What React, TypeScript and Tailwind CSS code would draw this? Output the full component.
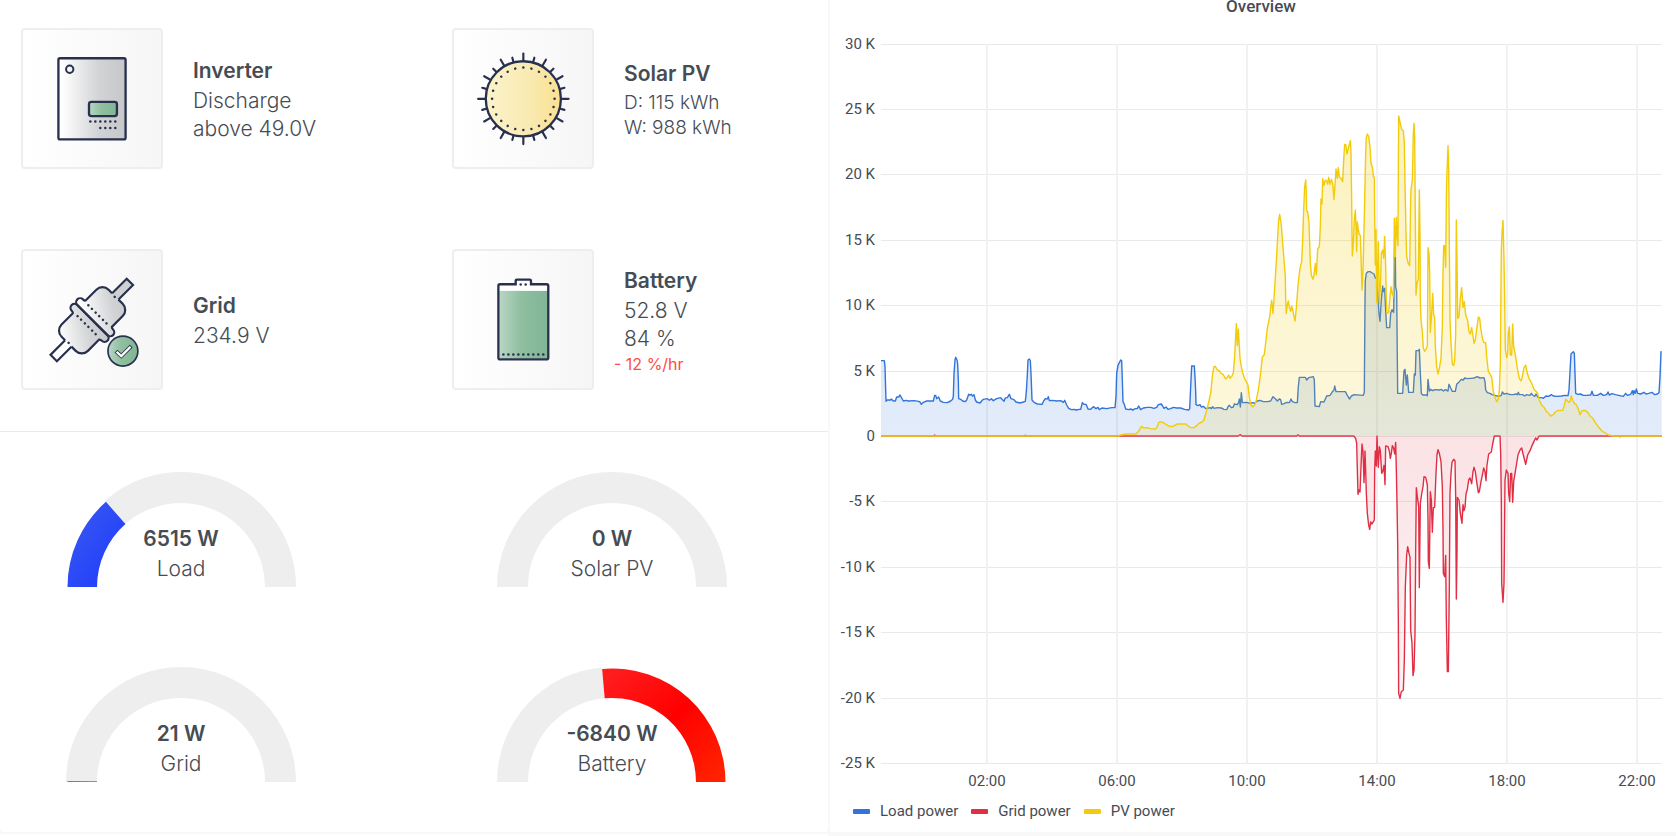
import React from 'react'

const INK = '#28304d'

type Trace = { x: number; y: number; points: string }

// chart samples, split by part of the day; x / y is the origin of each part (3 units = 1px)
const night = { x: -153, y: -348 }
const noon = { x: 897, y: -1008 }
const evening = { x: 1557, y: -1008 }
const exported = { x: 1347, y: -48 }

const loadPower: Trace[] = [
    { ...night, points: '153,122 163,122 165,140 168,244 172,240 182,240 184,237 190,243 196,243 200,231 206,231 210,225 214,232 220,243 228,241 235,243 252,242 266,244 270,246 274,253 280,247 290,243 310,243 314,226 317,226 320,236 326,231 331,243 340,247 352,248 362,243 368,238 370,228 372,160 375,120 377,112 381,120 383,132 385,180 386,236 392,238 398,243 406,245 410,240 416,223 420,225 424,223 428,228 432,224 436,240 440,246 450,249 455,243 460,238 472,236 478,241 484,236 490,242 500,236 512,233 516,238 522,244 526,234 532,233 538,223 543,236 552,239 558,246 570,249 580,246 586,244 589,215 592,165 594,120 598,117 601,122 603,160 606,240 612,247 622,252 636,253 641,243 646,236 652,237 655,230 658,242 668,241 680,243 692,242 700,247 704,241 710,255 716,265 724,269 732,268 738,270 748,268 752,268 757,248 762,253 768,253 774,267 782,268 790,260 798,266 804,262 808,269 816,264 830,266 845,263 855,263 858,230 860,160 864,136 872,120 875,122 877,180 879,245 883,253 887,267 896,269 902,267 908,270 916,266 922,266 926,258 932,269 940,264 952,262 962,262 972,265 980,262 985,254 994,252 998,258 1002,265 1008,261 1014,268 1022,266 1030,262 1040,264 1052,264 1064,268 1076,270 1079,266 1082,200 1085,138 1093,138 1095,170 1097,215 1098,254 1104,257 1110,254 1114,261 1120,259 1126,265' },
    { ...noon, points: '82,925 90,923 94,926 98,920 102,925 112,923 124,924 132,928 140,929 144,920 148,916 154,923 160,921 163,912 172,914 176,907 178,897 181,921 184,878 187,908 200,907 210,910 218,908 224,910 232,903 240,901 250,905 262,905 272,903 279,890 286,896 292,903 298,897 302,899 305,913 312,911 320,907 328,908 333,897 337,905 345,908 352,908 355,860 358,832 376,832 380,840 386,833 400,830 403,840 405,918 418,920 422,905 432,906 440,888 450,886 456,877 462,870 464,858 468,875 476,875 496,875 502,886 509,897 514,888 522,884 550,886 553,876 555,600 556,540 559,520 564,515 570,515 577,519 582,522 586,534 590,534 594,590 597,640 600,664 604,600 608,558 610,575 614,565 617,630 620,683 629,683 632,640 636,629 641,637 643,520 645,380 647,560 650,575 653,880 668,880 672,812 675,808 679,855 682,825 686,877 700,877 703,822 706,825 708,752 716,752 718,748 721,820' },
    { ...evening, points: '64,880 68,885 80,885 82,887 84,838 88,873 92,868 98,872 104,869 118,870 124,868 130,873 136,869 144,873 147,853 152,864 157,874 166,874 170,853 178,845 184,838 190,840 194,834 202,836 212,835 222,834 232,830 240,834 252,833 255,845 257,870 262,878 270,880 276,884 284,886 296,889 304,886 307,876 312,882 320,880 330,884 340,884 348,882 352,884 355,877 358,884 368,884 374,888 380,884 390,886 394,880 398,885 404,889 408,882 414,892 424,893 430,895 438,888 446,889 454,884 460,888 470,889 484,888 494,886 504,887 507,870 510,815 513,762 520,755 523,760 525,820 527,880 534,883 542,882 550,886 560,886 572,885 576,874 580,886 592,886 602,880 610,886 620,884 624,876 628,885 636,881 646,884 656,886 670,889 677,880 682,886 692,883 697,872 700,884 702,872 706,880 709,867 713,880 722,882 732,877 738,882 746,880 756,877 764,884 772,882 777,878 780,830 783,755 785,755' },
]

const pvPower: Trace[] = [
    { ...night, points: '153,348 865,348 872,345 890,342 918,342 926,334 932,322 936,319 940,324 952,323 960,326 976,327 980,323 986,308 992,305 1000,308 1008,313 1016,318 1026,320 1034,316 1042,312 1068,312 1074,318 1082,323 1092,323 1100,317 1106,311 1116,306' },
    { ...noon, points: '72,960 76,945 84,915 92,880 98,820 102,800 106,799 112,810 118,813 124,821 130,824 137,837 142,832 146,825 150,835 156,828 160,818 164,770 166,730 169,671 172,737 175,687 178,740 180,775 184,800 188,818 194,836 204,855 207,885 212,914 218,921 224,914 228,905 234,875 240,835 244,800 247,772 253,763 258,720 262,685 268,655 270,645 272,622 275,601 279,640 283,580 288,500 292,430 296,360 299,343 304,375 308,430 312,480 316,530 317,600 319,640 322,615 325,603 328,622 332,634 335,618 339,633 342,650 345,663 349,625 354,555 358,520 362,495 365,485 368,420 371,330 374,260 377,240 379,280 380,333 383,335 387,370 389,430 391,490 394,525 399,538 402,525 406,490 409,525 413,447 418,440 421,380 423,297 426,312 428,236 432,257 436,240 440,243 443,252 446,232 450,253 454,238 458,250 462,298 466,240 468,207 472,235 475,203 478,230 484,236 488,245 491,180 494,133 497,133 501,162 506,140 511,122 513,160 515,300 516,400 517,468 520,430 523,360 526,330 528,380 530,455 532,366 535,390 538,404 541,406 544,500 546,570 549,510 551,430 554,300 557,160 559,112 562,102 566,110 570,140 573,190 578,205 580,230 583,232 584,350 586,495 588,388 589,500 590,608 593,500 595,425 598,610 601,560 604,460 608,450 611,475 614,409 617,500 619,600 621,640 626,637 630,590 633,560 636,580 640,590 642,450 643,355 646,470 649,352 651,400 654,437 655,200 656,48 661,70 665,88 670,93 673,130 675,250 678,400 680,470 684,488 689,497 692,300 693,268 697,240 700,100 702,70 704,110 706,350 708,585 711,550 715,538 717,350 718,270 720,400' },
    { ...evening, points: '61,600 63,660 67,695 70,745 74,754 78,747 82,738 83,600 84,443 87,460 89,520 91,697 95,640 98,580 101,645 104,652 106,740 110,800 114,822 118,805 123,775 127,680 129,520 131,437 134,437 137,502 139,300 140,240 144,137 146,200 148,440 150,660 153,730 157,792 161,797 164,780 167,700 168,500 169,360 171,480 173,655 177,650 181,595 185,563 189,622 193,605 197,645 203,662 207,695 211,702 215,683 219,708 222,730 226,720 231,680 235,651 239,655 243,690 248,718 252,728 257,728 260,770 265,815 270,822 275,832 280,875 286,895 290,905 295,897 298,870 301,790 304,450 306,400 309,361 312,480 314,600 316,750 320,773 323,760 325,700 328,680 331,765 335,765 338,672 341,740 347,770 352,805 358,835 363,843 367,830 372,803 377,795 382,820 387,835 395,850 402,868 412,878 418,900 424,914 432,922 440,935 446,940 452,948 460,944 466,936 474,931 488,931 492,920 497,898 502,902 506,907 511,903 514,888 518,900 523,910 528,913 534,924 540,944 546,932 556,931 564,938 570,948 578,954 586,968 596,982 606,993 616,999 626,1005 640,1008 785,1008' },
]

const gridPower: Trace[] = [
    { ...night, points: '153,348 312,348 314,345 316,348 584,348 586,346 588,348 1225,348 1231,344 1236,348' },
    { ...noon, points: '350,1008 354,1004 358,1008' },
    { ...exported, points: '0,48 72,48 77,56 80,70 82,150 84,223 87,210 90,216 93,140 96,72 99,95 102,188 105,93 107,150 109,220 112,280 116,315 119,328 122,306 126,312 130,305 133,300 134,150 136,93 139,138 141,48 143,100 145,142 148,80 151,92 155,160 159,152 162,136 165,194 167,78 174,80 178,93 181,115 184,100 187,77 191,85 194,102 197,67 199,150 201,250 203,370 205,600 206,820 210,835 214,815 220,810 223,720 226,500 230,405 233,380 237,400 240,412 242,630 246,670 249,767 252,750 255,640 257,400 259,203 262,230 266,260 268,503 271,250 275,222 279,200 282,170 287,172 292,195 294,300 295,425 298,445 301,215 304,240 307,337 310,263 314,262 318,160 321,105 324,89 328,100 333,125 337,200 339,330 340,460 344,470 347,406 349,600 352,755 355,755 358,500 360,220 363,160 366,127 371,118 375,122 377,230 379,537 381,400 382,232 387,240 391,280 396,310 399,254 402,272 405,262 408,222 412,208 416,180 420,174 425,191 429,155 432,142 436,155 440,185 445,218 448,215 453,185 458,160 461,144 465,155 468,182 471,135 476,102 484,96 488,72 493,48 510,48 512,100 514,250 515,490 519,547 522,490 523,400 525,180 529,150 534,160 536,220 539,245 542,160 545,160 548,247 551,185 556,155 564,105 570,90 575,84 580,105 587,133 593,105 600,92 606,77 613,62 617,54 621,60 627,48 868,48 870,50 872,48 995,48' },
]

const LEFT = 51
const ZERO = 418
const STEP = 65.4

const toLine = (traces: Trace[]) =>
    traces
        .flatMap((t) =>
            t.points.split(' ').map((p) => {
                const [x, y] = p.split(',').map(Number)
                return `${(LEFT + (x + t.x) / 3).toFixed(2)},${(ZERO + (y + t.y) / 3).toFixed(2)}`
            })
        )
        .join(' ')

const series = [
    { id: 'load', name: 'Load power', color: '#3274d9', swatch: 'bg-[#3274d9]', line: toLine(loadPower) },
    { id: 'grid', name: 'Grid power', color: '#e02f44', swatch: 'bg-[#e02f44]', line: toLine(gridPower) },
    { id: 'pv', name: 'PV power', color: '#f2cc0c', swatch: 'bg-[#f2cc0c]', line: toLine(pvPower) },
]

const hours = ['02:00', '06:00', '10:00', '14:00', '18:00', '22:00']
const levels = [30, 25, 20, 15, 10, 5, 0, -5, -10, -15, -20, -25]

const OverviewChart = () => {
    const bottom = ZERO + 5 * STEP
    return (
        <svg viewBox="0 0 846 776" className="w-full h-auto block" role="img" aria-label="Overview">
            <defs>
                <linearGradient id="load-fill" gradientUnits="userSpaceOnUse" x1="0" y1="26" x2="0" y2={ZERO}>
                    <stop offset="0" stopColor="#3274d9" stopOpacity="0.22" />
                    <stop offset="1" stopColor="#3274d9" stopOpacity="0.14" />
                </linearGradient>
                <linearGradient id="pv-fill" gradientUnits="userSpaceOnUse" x1="0" y1="90" x2="0" y2={ZERO}>
                    <stop offset="0" stopColor="#f2cc0c" stopOpacity="0.27" />
                    <stop offset="1" stopColor="#f2cc0c" stopOpacity="0.14" />
                </linearGradient>
                <linearGradient id="grid-fill" gradientUnits="userSpaceOnUse" x1="0" y1={ZERO} x2="0" y2={bottom}>
                    <stop offset="0" stopColor="#e02f44" stopOpacity="0.14" />
                    <stop offset="1" stopColor="#e02f44" stopOpacity="0.03" />
                </linearGradient>
            </defs>
            {levels.map((k) => {
                const y = Math.round(ZERO - (k / 5) * STEP)
                return (
                    <g key={k}>
                        <line x1={LEFT} x2="832" y1={y + 0.5} y2={y + 0.5} stroke="#e9e9e9" />
                        <text x="45" y={y + 5} textAnchor="end" fontSize="15" fill="#464c54">
                            {k === 0 ? '0' : `${k} K`}
                        </text>
                    </g>
                )
            })}
            {hours.map((h, i) => (
                <g key={h}>
                    <line x1={157 + i * 130} x2={157 + i * 130} y1="26" y2={bottom} stroke="#f1f1f1" strokeWidth="2" />
                    <text x={157 + i * 130} y="768" textAnchor="middle" fontSize="15" fill="#464c54">{h}</text>
                </g>
            ))}
            {series.map((s) => (
                <g key={s.id}>
                    <polygon points={`${LEFT},${ZERO} ${s.line} 831.7,${ZERO}`} fill={`url(#${s.id}-fill)`} />
                    <polyline points={s.line} fill="none" stroke={s.color} strokeWidth="1.4" strokeLinejoin="round" />
                </g>
            ))}
        </svg>
    )
}

const Gradients = () => (
    <svg width="0" height="0" className="absolute" aria-hidden="true">
        <defs>
            <linearGradient id="steel">
                <stop offset="0.05" stopColor="#ffffff" />
                <stop offset="0.6" stopColor="#d2d3d5" />
                <stop offset="1" stopColor="#c6c7c9" />
            </linearGradient>
            <linearGradient id="steel-diag" x1="0" y1="0" x2="1" y2="1">
                <stop offset="0.1" stopColor="#ffffff" />
                <stop offset="0.65" stopColor="#d2d3d5" />
                <stop offset="1" stopColor="#c6c7c9" />
            </linearGradient>
            <linearGradient id="leaf">
                <stop offset="0" stopColor="#b9d5c4" />
                <stop offset="0.45" stopColor="#8fbf9f" />
                <stop offset="1" stopColor="#80b596" />
            </linearGradient>
            <linearGradient id="sun">
                <stop offset="0" stopColor="#fcf3cb" />
                <stop offset="0.6" stopColor="#f9eab0" />
                <stop offset="1" stopColor="#fbe08f" />
            </linearGradient>
            <linearGradient id="blue-arc" x1="0" y1="0" x2="1" y2="1">
                <stop offset="0" stopColor="#3d5cf2" />
                <stop offset="1" stopColor="#1a38fb" />
            </linearGradient>
            <linearGradient id="red-arc" x1="0" y1="0" x2="1" y2="1">
                <stop offset="0" stopColor="#ff2020" />
                <stop offset="0.5" stopColor="#ff0000" />
                <stop offset="1" stopColor="#ff2600" />
            </linearGradient>
        </defs>
    </svg>
)

const Dots = ({ at }: { at: number[][] }) => (
    <>
        {at.map(([x, y]) => (
            <circle key={`${x}-${y}`} cx={x} cy={y} r="3.8" fill={INK} />
        ))}
    </>
)

const InverterIcon = () => (
    <svg viewBox="70 90 412 412" className="w-full h-full" aria-hidden="true">
        <rect x="175" y="175" width="202" height="244" rx="5" fill="url(#steel)" stroke={INK} strokeWidth="7" />
        <circle cx="209" cy="208" r="11" fill="none" stroke={INK} strokeWidth="6" />
        <rect x="267" y="306" width="84" height="43" rx="7" fill="url(#leaf)" stroke={INK} strokeWidth="7" />
        <Dots at={[271, 286, 301, 316, 331, 346].map((x) => [x, 365])} />
        <Dots at={[301, 316, 331, 346].map((x) => [x, 385])} />
    </svg>
)

const SolarIcon = () => {
    const steps = Array.from({ length: 24 }, (_, i) => i)
    return (
        <svg viewBox="102 90 412 412" className="w-full h-full" aria-hidden="true">
            {steps.map((i) => (
                <g key={i} transform={`rotate(${i * 15} 309 297)`}>
                    <line x1="309" x2="309" y1="184" y2={i % 2 ? 169 : 161} stroke={INK} strokeWidth="6.5" strokeLinecap="round" />
                </g>
            ))}
            <circle cx="309" cy="297" r="113" fill="url(#sun)" stroke={INK} strokeWidth="7" />
            {steps.map((i) => (
                <circle key={i} cx="309" cy="203" r="3.8" fill={INK} transform={`rotate(${i * 15} 309 297)`} />
            ))}
        </svg>
    )
}

const GridIcon = () => (
    <svg viewBox="70 63 412 412" className="w-full h-full" aria-hidden="true">
        <g transform="translate(275 270) rotate(-45)" stroke={INK} strokeWidth="6.5">
            <path d="M98 -13H162V14H98" fill="#cfd0d2" />
            <path d="M-98 -13H-162V14H-98" fill="#fff" />
            <path d="M1 -62A12 12 0 0 1 25 -62Q26 -56 28 -54H74A26 26 0 0 1 100 -28V32A26 26 0 0 1 74 58H28Q26 60 25 66A12 12 0 0 1 1 66Z" fill="url(#steel-diag)" stroke="none" />
            <path d="M1 -62A12 12 0 0 0 -23 -62Q-24 -56 -26 -54H-74A26 26 0 0 0 -100 -28V32A26 26 0 0 0 -74 58H-26Q-24 60 -23 66A12 12 0 0 0 1 66Z" fill="url(#steel-diag)" stroke="none" />
            <path d="M100 -13V-28A26 26 0 0 0 74 -54H28Q25 -56 25 -62A12 12 0 0 0 1 -62V66A12 12 0 0 0 25 66Q25 60 28 58H74A26 26 0 0 0 100 32V14" fill="none" />
            <path d="M-100 -13V-28A26 26 0 0 1 -74 -54H-26Q-23 -56 -23 -62A12 12 0 0 1 1 -62V66A12 12 0 0 1 -23 66Q-23 60 -26 58H-74A26 26 0 0 1 -100 32V14" fill="none" />
        </g>
        <g transform="translate(275 270) rotate(-45)">
            <Dots at={[-38, -23, -7, 8, 24, 39].flatMap((y) => [[24, y], [-22, y]])} />
            <Dots at={[[98, 0], [-98, 0]]} />
        </g>
        <circle cx="369" cy="364" r="45" fill="url(#leaf)" stroke={INK} strokeWidth="5" />
        <path d="M348 364L364 379L394 349" fill="none" stroke={INK} strokeWidth="12" />
        <path d="M350 366L364 379L392 351" fill="none" stroke="#fff" strokeWidth="7" />
    </svg>
)

const BatteryIcon = () => (
    <svg viewBox="102 63 412 412" className="w-full h-full" aria-hidden="true">
        <path
            d="M239 163H286V153Q286 149 290 149H328Q332 149 332 153V163H379Q384 163 384 168V384Q384 389 379 389H239Q234 389 234 384V168Q234 163 239 163Z"
            fill="#fff"
        />
        <rect x="237" y="183" width="145" height="204" fill="url(#leaf)" />
        <path
            d="M239 163H286V153Q286 149 290 149H328Q332 149 332 153V163H379Q384 163 384 168V384Q384 389 379 389H239Q234 389 234 384V168Q234 163 239 163Z"
            fill="none"
            stroke={INK}
            strokeWidth="7"
        />
        <Dots at={[249, 264, 279, 294, 309, 324, 339, 354, 369].map((x) => [x, 374])} />
        <Dots at={[[301, 164], [316, 164]]} />
    </svg>
)

const Tile = ({ icon, title, children }: { icon: React.ReactNode; title: string; children: React.ReactNode }) => (
    <div className="flex items-center gap-[30px] pl-[21px]">
        <div className="w-[142px] h-[141px] shrink-0 border-2 border-[#eeeeee] rounded bg-linear-to-r from-white to-[#f6f6f6]">
            {icon}
        </div>
        <div className="text-[21px] leading-7">
            <h3 className="font-semibold leading-8">{title}</h3>
            {children}
        </div>
    </div>
)

const point = (r: number, deg: number) => {
    const a = (deg * Math.PI) / 180
    return `${(115 - r * Math.cos(a)).toFixed(2)} ${(115 - r * Math.sin(a)).toFixed(2)}`
}

// half ring between two angles, 0 is the left end
const ring = (inner: number, outer: number, from: number, to: number) =>
    `M${point(outer, from)}A${outer} ${outer} 0 0 1 ${point(outer, to)}L${point(inner, to)}A${inner} ${inner} 0 0 0 ${point(inner, from)}Z`

type GaugeProps = { value: string; label: string; track: [number, number]; bar?: [number, number]; fill?: string }

const Gauge = ({ value, label, track, bar, fill }: GaugeProps) => (
    <div className="pl-[66px]">
        <div className="relative w-[230px]">
            <svg viewBox="0 0 230 115" className="block w-full" aria-hidden="true">
                <path d={ring(84, 115, track[0], track[1])} fill="#eeeeee" />
                {bar && <path d={ring(84, 113.5, bar[0], bar[1])} fill={fill} />}
            </svg>
            <div className="absolute inset-x-0 bottom-1 text-center text-[21px]">
                <p className="font-semibold leading-8">{value}</p>
                <p className="leading-7">{label}</p>
            </div>
        </div>
    </div>
)

const App = () => {
    return (
        <main className="min-h-screen bg-[#f8f8f8] grid grid-cols-[828fr_846fr] gap-[2px] text-[#464c54] font-['Roboto',sans-serif]">
            <Gradients />
            <div className="flex flex-col gap-[2px] min-w-0 font-['Inter',sans-serif] font-light">
                <section className="bg-white rounded-b-sm">
                    <div className="grid grid-cols-[431fr_397fr] gap-y-20 pt-7 pb-[41px] border-b border-[#ebebeb]">
                        <Tile icon={<InverterIcon />} title="Inverter">
                            <p>Discharge</p>
                            <p>above 49.0V</p>
                        </Tile>
                        <Tile icon={<SolarIcon />} title="Solar PV">
                            <p className="text-[19px] leading-[25px]">D: 115 kWh</p>
                            <p className="text-[19px] leading-[25px]">W: 988 kWh</p>
                        </Tile>
                        <Tile icon={<GridIcon />} title="Grid">
                            <p>234.9 V</p>
                        </Tile>
                        <Tile icon={<BatteryIcon />} title="Battery">
                            <p>52.8 V</p>
                            <p>84 %</p>
                            <p className="text-base leading-[22px] font-normal text-[#ff4b42] -ml-[10px]">- 12 %/hr</p>
                        </Tile>
                    </div>
                    <div className="grid grid-cols-[431fr_397fr] gap-y-20 pt-10 pb-[50px]">
                        <Gauge value="6515 W" label="Load" track={[48.6, 180]} bar={[0, 48.6]} fill="url(#blue-arc)" />
                        <Gauge value="0 W" label="Solar PV" track={[0, 180]} />
                        <Gauge value="21 W" label="Grid" track={[0, 180]} bar={[0, 0.5]} fill="#f5473f" />
                        <Gauge value="-6840 W" label="Battery" track={[0, 85]} bar={[85, 180]} fill="url(#red-arc)" />
                    </div>
                </section>
                <section className="bg-white flex-1"></section>
            </div>
            <section className="bg-white self-start min-w-0 pb-[9px]">
                <h2 className="-mt-[6px] pl-4 text-center font-medium text-[17px] leading-6">Overview</h2>
                <OverviewChart />
                <ul className="flex gap-[13px] pl-[23px] mt-[5px] text-[15px] leading-6">
                    {series.map((s) => (
                        <li key={s.id} className="flex items-center gap-[10px]">
                            <span className={`w-[17px] h-[5px] rounded-[1px] ${s.swatch}`}></span>
                            {s.name}
                        </li>
                    ))}
                </ul>
            </section>
        </main>
    )
}

export default App
